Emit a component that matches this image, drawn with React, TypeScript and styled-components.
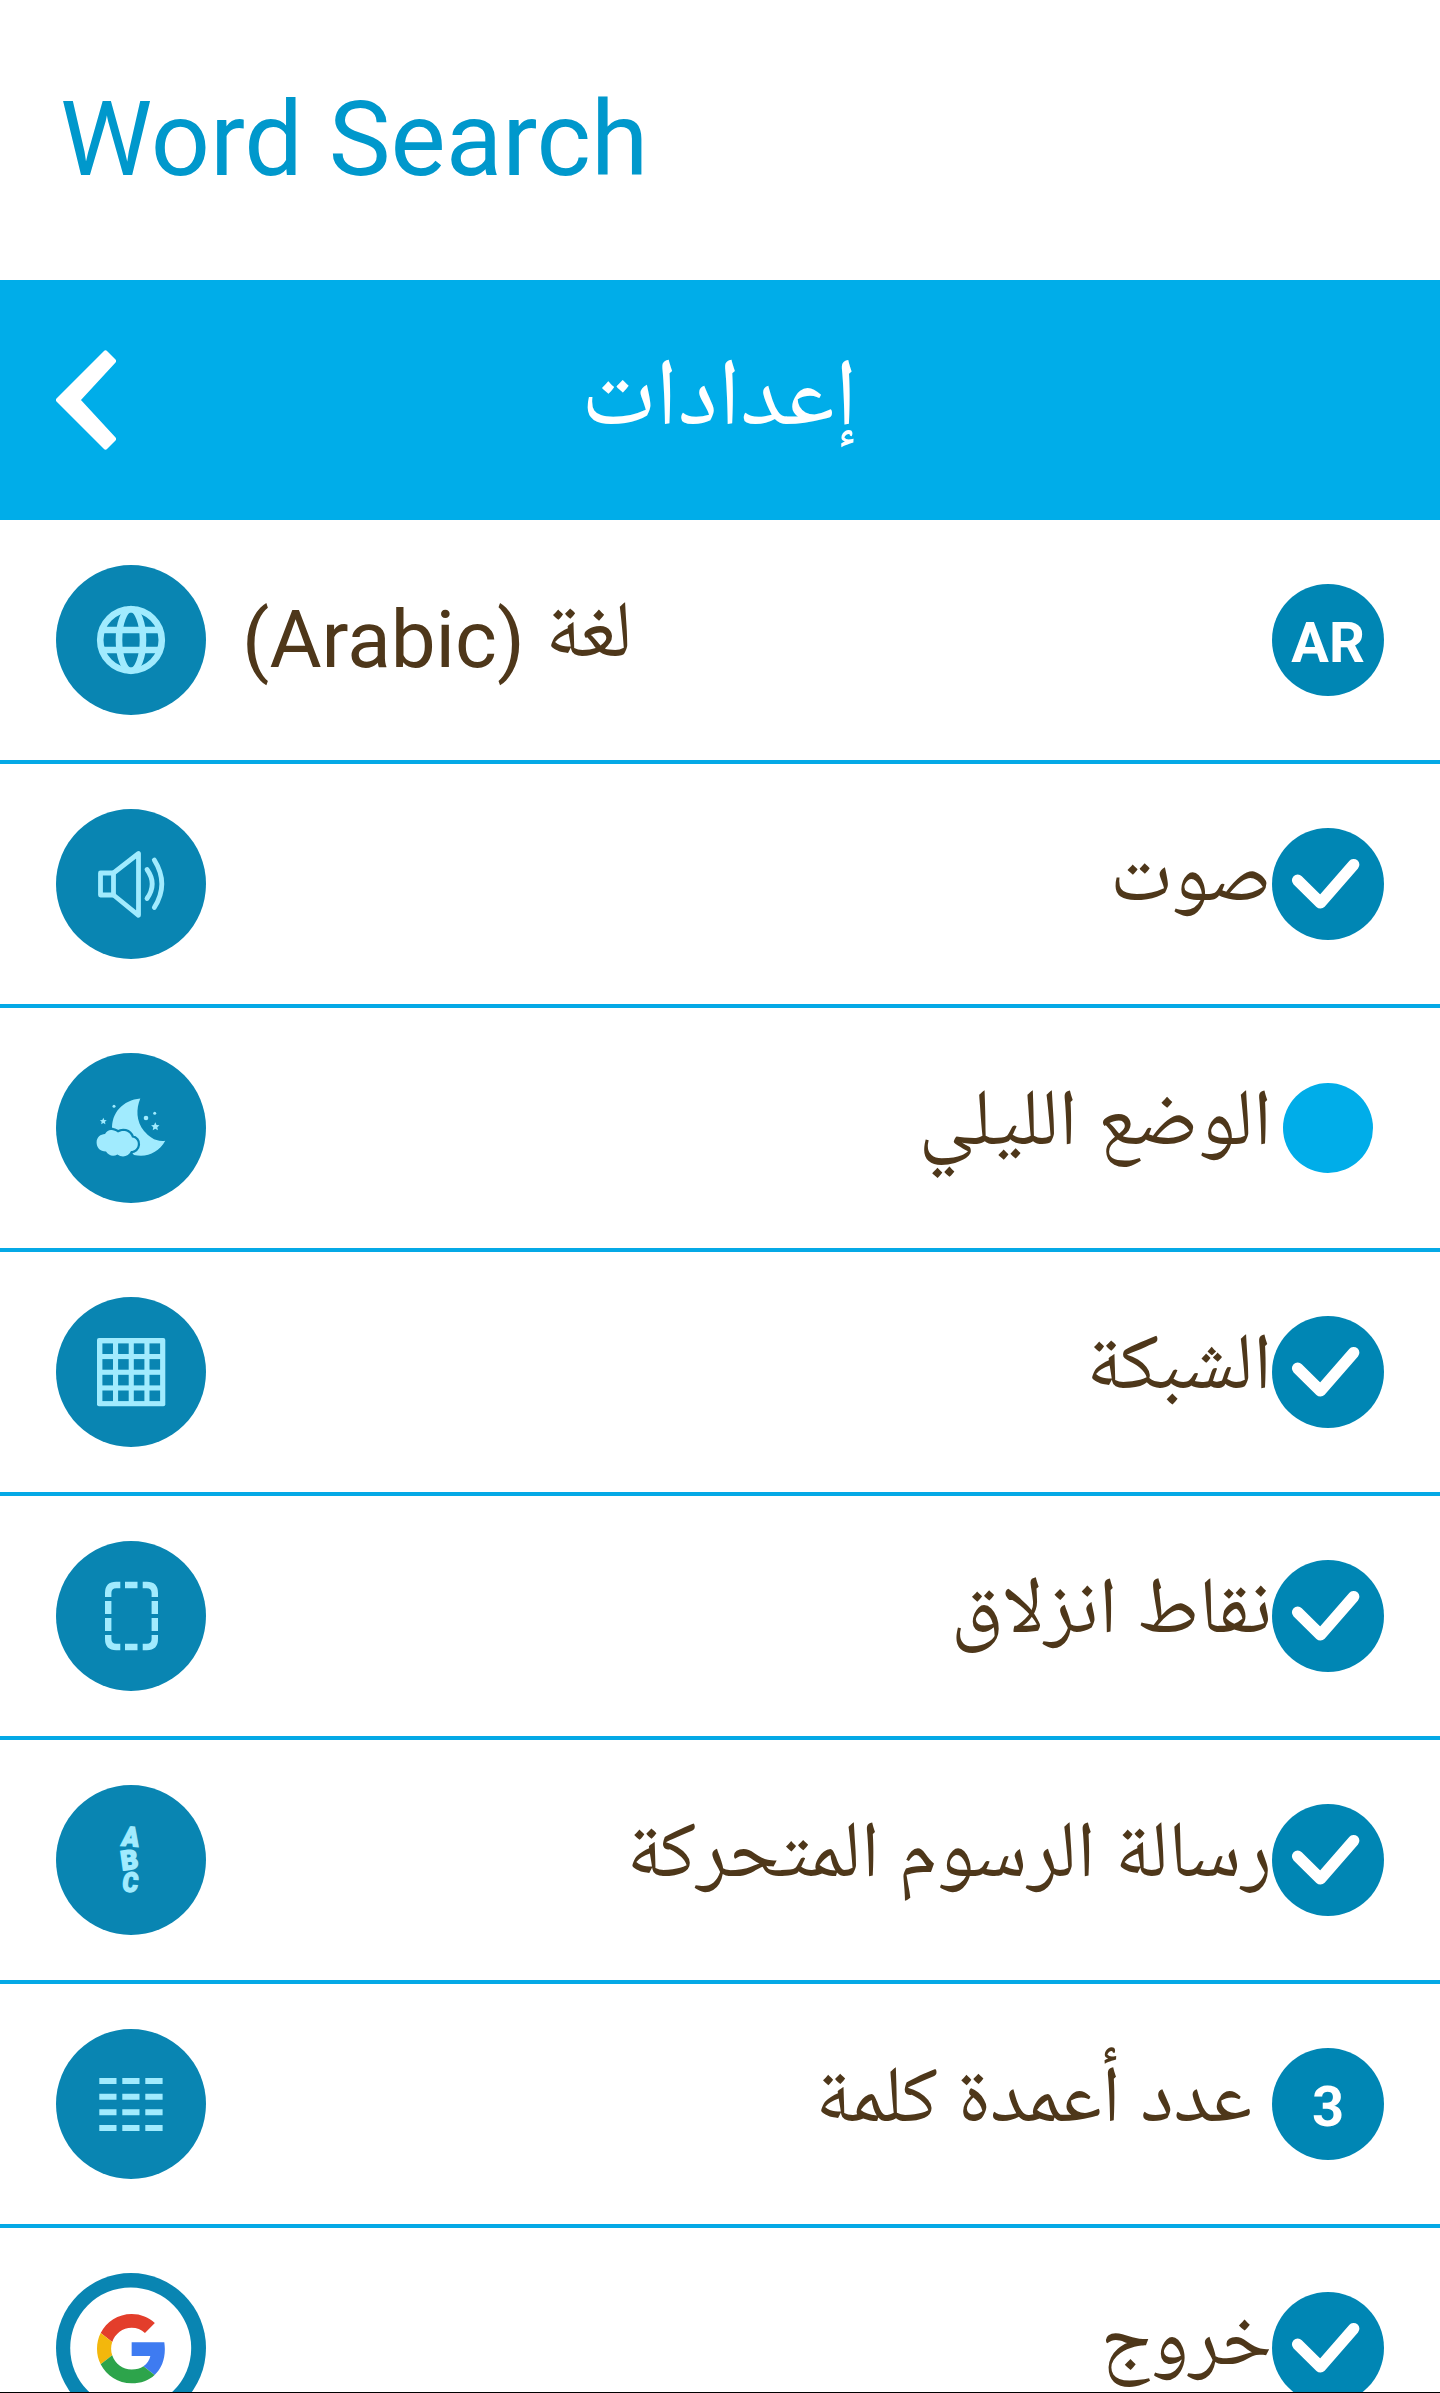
import React from 'react';
import styled, { createGlobalStyle } from 'styled-components';

const BG = '#0985b2';
const PALE = '#a1ebfe';

const GlobalStyle = createGlobalStyle`
  * { box-sizing: border-box; }
  html { background: #fff; }
  body { margin: 0; overflow: hidden; }
`;

const Screen = styled.main`
  display: flex;
  flex-direction: column;
  height: 2393px;
  overflow: hidden;
  background: #fff;
  border-bottom: 1px solid #000;
  font-family: Roboto, "Noto Naskh Arabic UI", "Noto Naskh Arabic", sans-serif;
`;

const AppBar = styled.header`
  flex: none;
  height: 280px;
  padding: 79px 0 0 60px;
`;

const AppName = styled.h1`
  margin: 0;
  font-size: 104px;
  line-height: 122px;
  font-weight: 400;
  color: #0098cc;
`;

const TitleBar = styled.div`
  flex: none;
  display: grid;
  grid-template-columns: 60px 1fr 60px;
  align-items: center;
  height: 240px;
  padding: 0 56px;
  background: #00ade9;
`;

const BackButton = styled.button`
  display: block;
  width: 60px;
  height: 100px;
  padding: 0;
  border: 0;
  background: none;
`;

const ScreenTitle = styled.h2`
  margin: 0;
  padding-top: 8px;
  font-size: 96px;
  line-height: 120px;
  font-weight: 400;
  text-align: center;
  color: #fff;
`;

const List = styled.ul`
  margin: 0;
  padding: 0;
  list-style: none;
`;

const Row = styled.li`
  display: flex;
  align-items: center;
  height: 244px;
  padding: 0 56px;
  border-bottom: 4px solid #05a9e6;
`;

const Icon = styled.svg`
  flex: none;
  display: block;
  width: 150px;
  height: 150px;
`;

const Label = styled.span<{ $side: 'left' | 'right'; $gap: number; $tall: boolean; $tight: boolean }>`
  flex: 1;
  direction: rtl;
  white-space: nowrap;
  font-family: ${(p) => (p.$tall ? 'Roboto, "Noto Naskh Arabic", sans-serif' : 'inherit')};
  font-size: 80px;
  line-height: 84px;
  word-spacing: ${(p) => (p.$tight ? '-1.5px' : 'normal')};
  color: #4e371a;
  text-align: ${(p) => p.$side};
  padding-left: ${(p) => (p.$side === 'left' ? p.$gap : 0)}px;
  padding-right: ${(p) => (p.$side === 'right' ? p.$gap : 0)}px;
  padding-bottom: ${(p) => (p.$tall ? 20 : 0)}px;
`;

const Badge = styled.span<{ $on: boolean }>`
  flex: none;
  display: flex;
  align-items: center;
  justify-content: center;
  width: ${(p) => (p.$on ? 112 : 90)}px;
  height: ${(p) => (p.$on ? 112 : 90)}px;
  margin: 0 ${(p) => (p.$on ? 0 : 11)}px;
  border-radius: 50%;
  background: ${(p) => (p.$on ? '#0086b4' : '#00ade9')};
  color: #fff;
  font-size: 56px;
  line-height: 66px;
  font-weight: 700;
`;

const BadgeText = styled.span`
  padding-top: 5px;
`;

const GlobeIcon = () => (
  <g fill="none" stroke={PALE} strokeWidth="6.6">
    <circle cx="75" cy="75" r="30.8" />
    <ellipse cx="75" cy="75" rx="12" ry="31" />
    <path d="M46 65h58M46 85h58" />
  </g>
);

const SoundIcon = () => (
  <g fill="none" stroke={PALE} strokeWidth="4.8" strokeLinejoin="round" strokeLinecap="round">
    <path d="M44.5 64h13v22h-13z" />
    <path d="M57.5 64L82.5 44.5v61.8L57.5 86" />
    <path d="M91 60.5q10.4 14.5 0 29M98.3 51q15 24 0 47.5" />
  </g>
);

const star = (cx: number, cy: number, r: number) =>
  Array.from({ length: 10 }, (_, i) => {
    const a = (Math.PI * i) / 5 - Math.PI / 2;
    const d = i % 2 ? r * 0.48 : r;
    return `${cx + d * Math.cos(a)},${cy + d * Math.sin(a)}`;
  }).join(' ');

const NightIcon = () => (
  <g fill={PALE}>
    <path d="M84.3 45.5C67 47 55 60 56.2 77L78 102C91 105 102.5 99.5 109.3 87.8C99 89 93 83.5 88 78C80 68 80 56 84.3 45.5Z" />
    <path
      d="M50 98.5C44 98.5 40.6 94.5 40.6 89.5C40.6 84 44.5 81.3 49 81C51 77.5 54 76.3 57 77.3C59.5 77.8 61 79 62 79.5C66 77 73.5 77 76 84.5C80 85 82.2 88 81.8 91.5C81.5 95.5 78.5 98 75 98C73 103.5 66 105 61.5 101.5C57 104 52.5 102.5 50 98.5Z"
      stroke={BG}
      strokeWidth="4.6"
      paintOrder="stroke"
    />
    <circle cx="58" cy="53.3" r="1.5" />
    <circle cx="98.7" cy="60.3" r="1.5" />
    <circle cx="90" cy="65" r="2.3" />
    <polygon points={star(47.3, 68.3, 3.6)} />
    <polygon points={star(99.3, 73.7, 4.4)} />
  </g>
);

const GridIcon = () => (
  <>
    <rect x="41" y="41" width="68.3" height="68.2" rx="2" fill={PALE} />
    {[0, 1, 2, 3].map((r) =>
      [0, 1, 2, 3].map((c) => (
        <rect key={`${r}-${c}`} x={46.4 + c * 15.7} y={46.4 + r * 15.7} width="10.6" height="10.6" fill={BG} />
      )),
    )}
  </>
);

const DashedIcon = () => (
  <g fill="none" stroke={PALE} strokeWidth="6.4">
    <path d="M52.2 56V52q0-8 8-8h4.1M86.7 44h4.1q8 0 8 8v4M52.2 94v4q0 8 8 8h4.1M86.7 106h4.1q8 0 8-8v-4" />
    <path d="M69 44h12.5M69 106h12.5M52.2 60v13M52.2 77v13M98.8 60v13M98.8 77v13" />
  </g>
);

const Letters = styled.g`
  font-family: Roboto, sans-serif;
  font-weight: 900;
  font-size: 27px;
  text-anchor: middle;
  fill: ${PALE};
  stroke: ${PALE};
  stroke-width: 1.4px;
`;

const LettersIcon = () => (
  <Letters>
    <text transform="translate(73.4 61) rotate(4) skewX(-5) scale(.94 1)">A</text>
    <text transform="translate(74.6 84.2) rotate(-8) scale(1 1)">B</text>
    <text transform="translate(73.4 106.6) rotate(3) skewX(-4) scale(.88 1)">C</text>
  </Letters>
);

const ColumnsIcon = () => (
  <path
    d="M43.3 52h17.2m5.8 0h17.2m5.8 0h17.3M43.3 67.7h17.2m5.8 0h17.2m5.8 0h17.3M43.3 83.3h17.2m5.8 0h17.2m5.8 0h17.3M43.3 99h17.2m5.8 0h17.2m5.8 0h17.3"
    stroke={PALE}
    strokeWidth="6"
  />
);

const GoogleIcon = () => (
  <>
    <circle cx="74.7" cy="75" r="60.5" fill="#fff" />
    <g transform="translate(41 41) scale(1.444)">
      <path fill="#e33e2b" d="M24 9.5c3.54 0 6.71 1.22 9.21 3.6l6.85-6.85C35.9 2.38 30.47 0 24 0 14.62 0 6.51 5.38 2.56 13.22l7.98 6.19C12.43 13.72 17.74 9.5 24 9.5z" />
      <path fill="#3e7bf1" d="M46.98 24.55c0-1.57-.15-3.09-.38-5.05H24v9.52h12.94c-.58 2.96-2.26 5.48-4.78 7.18l7.73 6c4.51-4.18 7.09-10.36 7.09-17.65z" />
      <path fill="#f3b70c" d="M10.53 28.59c-.48-1.45-.76-2.99-.76-4.59s.27-3.14.76-4.59l-7.98-6.19C.92 16.46 0 20.12 0 24c0 3.88.92 7.54 2.56 10.78l7.97-6.19z" />
      <path fill="#2da44b" d="M24 48c6.48 0 11.93-2.13 15.89-5.81l-7.73-6c-2.15 1.45-4.92 2.3-8.16 2.3-6.26 0-11.57-4.22-13.47-9.91l-7.98 6.19C6.51 42.62 14.62 48 24 48z" />
    </g>
  </>
);

const Check = () => (
  <svg width="112" height="112" viewBox="0 0 112 112">
    <path d="M25.7 52.3L48.5 74.8L81.6 36.7" fill="none" stroke="#fff" strokeWidth="11.6" strokeLinecap="round" strokeLinejoin="round" />
  </svg>
);

type Setting = {
  label: string;
  icon: () => React.JSX.Element;
  side?: 'left' | 'right';
  gap?: number;
  tall?: boolean;
  tight?: boolean;
  value: boolean | string;
};

const settings: Setting[] = [
  { label: 'لغة (Arabic)', icon: GlobeIcon, side: 'left', gap: 36, value: 'AR' },
  { label: 'صوت', icon: SoundIcon, value: true },
  { label: 'الوضع الليلي', icon: NightIcon, value: false },
  { label: 'الشبكة', icon: GridIcon, value: true },
  { label: 'نقاط انزلاق', icon: DashedIcon, value: true },
  { label: 'رسالة الرسوم المتحركة', icon: LettersIcon, tight: true, value: true },
  { label: 'عدد أعمدة كلمة', icon: ColumnsIcon, gap: 20, tall: true, value: '3' },
  { label: 'خروج', icon: GoogleIcon, value: true },
];

export default function App() {
  return (
    <Screen>
      <GlobalStyle />
      <AppBar>
        <AppName>Word Search</AppName>
      </AppBar>
      <TitleBar>
        <BackButton aria-label="رجوع">
          <svg width="60" height="100" viewBox="0 0 60 100">
            <path d="M49.5 3L57.5 11L21.5 50L57.5 89L49.5 97L2.5 50Z" fill="#fff" stroke="#fff" strokeWidth="5" strokeLinejoin="round" />
          </svg>
        </BackButton>
        <ScreenTitle>إعدادات</ScreenTitle>
      </TitleBar>
      <List>
        {settings.map(({ label, icon: Glyph, side = 'right', gap = 0, tall = false, tight = false, value }) => (
          <Row key={label}>
            <Icon viewBox="0 0 150 150">
              <circle cx="75" cy="75" r="75" fill={BG} />
              <Glyph />
            </Icon>
            <Label $side={side} $gap={gap} $tall={tall} $tight={tight}>{label}</Label>
            <Badge $on={value !== false}>
              {value === true && <Check />}
              {typeof value === 'string' && <BadgeText>{value}</BadgeText>}
            </Badge>
          </Row>
        ))}
      </List>
    </Screen>
  );
}
